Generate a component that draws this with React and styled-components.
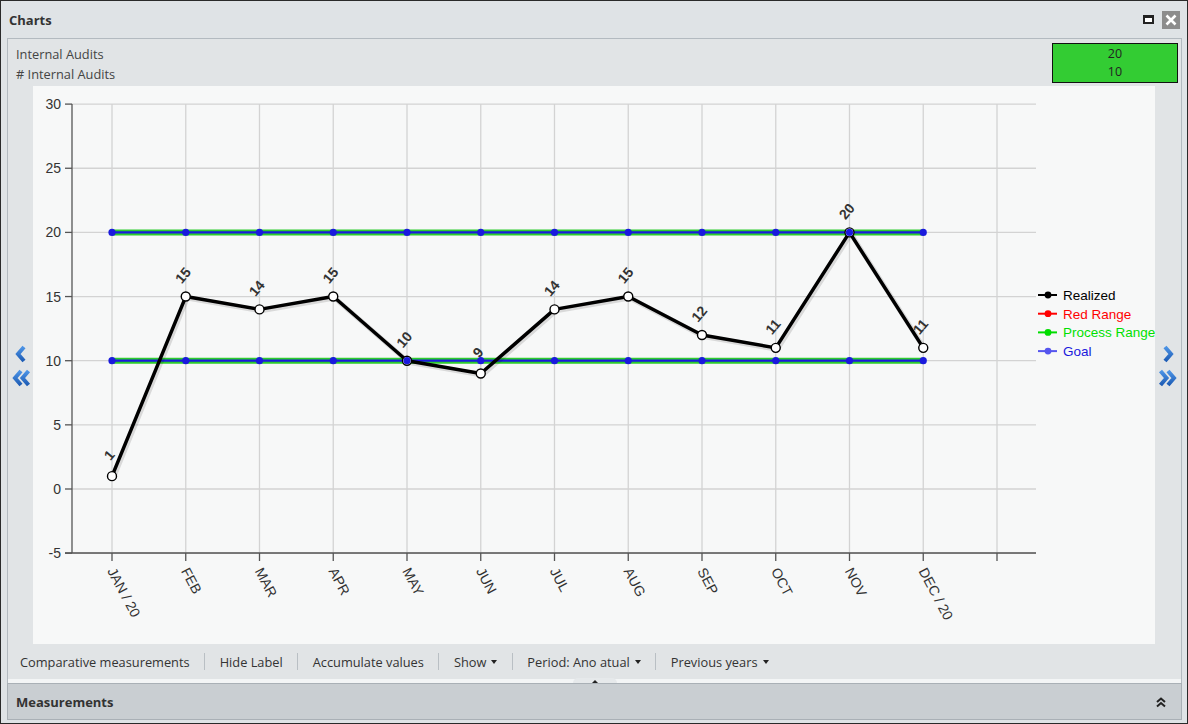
import styled, { createGlobalStyle } from "styled-components";

const GlobalStyle = createGlobalStyle`
  html, body { margin: 0; padding: 0; background: #ffffff; }
  * { box-sizing: border-box; }
`;

const Window = styled.div`
  width: 1188px;
  height: 724px;
  border: 1px solid #2a2a2a;
  background: #dfe3e6;
  display: flex;
  flex-direction: column;
  font-family: "Open Sans", "Noto Sans", sans-serif;
  color: #333;
`;

const TitleBar = styled.div`
  height: 37px;
  display: flex;
  align-items: center;
  justify-content: space-between;
  padding: 0 7px 0 8px;
`;

const Title = styled.span`
  font-weight: bold;
  font-size: 13px;
  color: #333;
`;

const TitleTools = styled.div`
  display: flex;
  align-items: center;
  gap: 8px;
`;

const MaxIcon = styled.span`
  width: 11px;
  height: 9px;
  border: 2px solid #222;
  border-top-width: 3px;
  background: #fff;
`;

const CloseBox = styled.span`
  width: 18px;
  height: 18px;
  background: #8c8c8c;
  display: flex;
  align-items: center;
  justify-content: center;
`;

const Panel = styled.div`
  margin: 0 5px 0 6px;
  border: 1px solid #b3bac0;
  border-bottom: none;
  background: #e1e4e6;
  display: flex;
  flex-direction: column;
`;

const PanelHead = styled.div`
  height: 47px;
  display: flex;
  justify-content: space-between;
  padding: 4px 3px 0 8px;
`;

const HeadText = styled.div`
  display: flex;
  flex-direction: column;
  font-size: 12.8px;
  line-height: 20px;
  color: #444;
  padding-top: 1px;
`;

const StatusBox = styled.div`
  width: 126px;
  height: 40px;
  background: #33cc33;
  border: 1px solid #111;
  display: flex;
  flex-direction: column;
  align-items: center;
  justify-content: center;
  font-size: 12.5px;
  line-height: 18px;
  color: #222;
`;

const ChartRow = styled.div`
  height: 558px;
  display: flex;
`;

const Nav = styled.div`
  width: ${(p) => p.$w}px;
  display: flex;
  flex-direction: column;
  align-items: center;
  justify-content: center;
  gap: 6px;
  padding-top: 2px;
`;

const ChartArea = styled.div`
  width: 1122px;
  background: #f7f8f8;
`;

const Toolbar = styled.div`
  height: 35px;
  display: flex;
  align-items: center;
  padding-left: 4px;
  font-size: 12.8px;
  color: #333;
`;

const ToolItem = styled.span`
  padding: 0 8px;
  display: flex;
  align-items: center;
  gap: 5px;
  white-space: nowrap;
`;

const Sep = styled.span`
  width: 1px;
  height: 17px;
  background: #b9bfc4;
  margin: 0 6.5px;
`;

const Caret = styled.span`
  width: 0;
  height: 0;
  border-left: 3.5px solid transparent;
  border-right: 3.5px solid transparent;
  border-top: 4px solid #222;
`;

const Strip = styled.div`
  height: 4px;
  background: #f3f5f6;
  display: flex;
  justify-content: center;
`;

const Tab = styled.div`
  width: 44px;
  height: 5px;
  margin-top: -1px;
  background: #e6e9eb;
  border-radius: 6px 6px 0 0;
  display: flex;
  justify-content: center;
  padding-top: 1px;
  &::after {
    content: "";
    border-left: 3px solid transparent;
    border-right: 3px solid transparent;
    border-bottom: 3px solid #222;
  }
`;

const MeasureBar = styled.div`
  margin: 0 5px 0 6px;
  height: 37px;
  border: 1px solid #a9b0b6;
  background: #c9ced2;
  display: flex;
  align-items: center;
  justify-content: space-between;
  padding: 0 14px 0 8px;
`;

const MeasureTitle = styled.span`
  font-weight: bold;
  font-size: 13px;
  color: #333;
`;

const Chevron = ({ dbl, dir }) => (
  <svg width="20" height="18" viewBox="0 0 20 18">
    <defs>
      <linearGradient id={`g${dir}${dbl ? 2 : 1}`} x1="0" y1="0" x2="0" y2="1">
        <stop offset="0" stopColor="#4d94e6" />
        <stop offset="1" stopColor="#1d5cb5" />
      </linearGradient>
    </defs>
    <g transform={dir === "r" ? "translate(20,0) scale(-1,1)" : undefined}
       fill="none" stroke={`url(#g${dir}${dbl ? 2 : 1})`} strokeWidth="4" strokeLinejoin="miter">
      {dbl ? (
        <>
          <polyline points="10,2 4,9 10,16" />
          <polyline points="17.5,2 11.5,9 17.5,16" />
        </>
      ) : (
        <polyline points="13,2 7,9 13,16" />
      )}
    </g>
  </svg>
);

const realized = [1, 15, 14, 15, 10, 9, 14, 15, 12, 11, 20, 11];
const months = ["JAN / 20", "FEB", "MAR", "APR", "MAY", "JUN", "JUL", "AUG", "SEP", "OCT", "NOV", "DEC / 20"];
const xOf = (i) => 112 + i * 73.75;
const yOf = (v) => 489 - v * 12.83;

const legend = [
  ["Realized", "#000000", "#000000"],
  ["Red Range", "#ff0000", "#ff0000"],
  ["Process Range", "#00dd00", "#00e000"],
  ["Goal", "#5555ee", "#1a1add"],
];

const Chart = () => {
  const pts = realized.map((v, i) => `${xOf(i)},${yOf(v)}`).join(" ");
  const ticks = [-5, 0, 5, 10, 15, 20, 25, 30];
  return (
    <svg width="1122" height="558" viewBox="33 86 1122 558" fontFamily="'Liberation Sans', Arial, sans-serif">
      {ticks.map((t) => (
        <g key={t}>
          <line x1="72" x2="1036" y1={yOf(t)} y2={yOf(t)} stroke="#d3d3d3" strokeWidth="1.3" />
          <line x1="65" x2="72" y1={yOf(t)} y2={yOf(t)} stroke="#555" strokeWidth="1.3" />
          <text x="61" y={yOf(t) + 5} textAnchor="end" fontSize="14" fill="#333">{t}</text>
        </g>
      ))}
      {Array.from({ length: 13 }).map((_, i) => (
        <g key={i}>
          <line x1={xOf(i)} x2={xOf(i)} y1="104" y2="553" stroke="#d3d3d3" strokeWidth="1.3" />
          <line x1={xOf(i)} x2={xOf(i)} y1="553" y2="561" stroke="#555" strokeWidth="1.3" />
        </g>
      ))}
      <line x1="72" x2="72" y1="104" y2="553" stroke="#555" strokeWidth="1.3" />
      <line x1="65" x2="1036" y1="553" y2="553" stroke="#555" strokeWidth="1.3" />
      {months.map((m, i) => (
        <text key={m} x={xOf(i) - 5} y="571" fontSize="14" fill="#333"
              transform={`rotate(62 ${xOf(i) - 5} 571)`}>{m}</text>
      ))}

      {[20, 10].map((v) => (
        <g key={v}>
          <line x1={xOf(0)} x2={xOf(11)} y1={yOf(v)} y2={yOf(v)} stroke="#2ecc2e" strokeWidth="6" />
          <line x1={xOf(0)} x2={xOf(11)} y1={yOf(v)} y2={yOf(v)} stroke="#1a1add" strokeWidth="2.2" />
        </g>
      ))}

      <polyline points={pts} fill="none" stroke="#000" strokeOpacity="0.12" strokeWidth="5"
                transform="translate(1.5,1.5)" strokeLinejoin="round" />
      <polyline points={pts} fill="none" stroke="#000" strokeWidth="3.5" strokeLinejoin="round" />
      {realized.map((v, i) => (
        <circle key={i} cx={xOf(i)} cy={yOf(v)} r="4.5" fill="#fff" stroke="#000" strokeWidth="1.4" />
      ))}
      {[20, 10].map((v) =>
        realized.map((_, i) => (
          <circle key={`${v}-${i}`} cx={xOf(i)} cy={yOf(v)} r="3.6" fill="#1a1add" />
        ))
      )}
      {realized.map((v, i) => {
        const x = xOf(i) + 1;
        const y = yOf(v) - 18;
        return (
          <text key={i} x={x} y={y} fontSize="14" fontWeight="bold" fill="#333" textAnchor="middle"
                transform={`rotate(-50 ${x} ${y})`}>{v}</text>
        );
      })}

      {legend.map(([name, lineColor, textColor], i) => {
        const y = 295 + i * 18.7;
        return (
          <g key={name}>
            <line x1="1038" x2="1057" y1={y} y2={y} stroke={lineColor} strokeWidth="2" />
            <circle cx="1048" cy={y} r="3.4" fill={lineColor} />
            <text x="1063" y={y + 5} fontSize="13.5" fill={textColor}>{name}</text>
          </g>
        );
      })}
    </svg>
  );
};

const tools = [
  ["Comparative measurements", false],
  ["Hide Label", false],
  ["Accumulate values", false],
  ["Show", true],
  ["Period: Ano atual", true],
  ["Previous years", true],
];

const App = () => (
  <>
    <GlobalStyle />
    <Window>
      <TitleBar>
        <Title>Charts</Title>
        <TitleTools>
          <MaxIcon />
          <CloseBox>
            <svg width="12" height="12" viewBox="0 0 12 12">
              <path d="M1.5 1.5 L10.5 10.5 M10.5 1.5 L1.5 10.5" stroke="#fff" strokeWidth="2.6" />
            </svg>
          </CloseBox>
        </TitleTools>
      </TitleBar>
      <Panel>
        <PanelHead>
          <HeadText>
            <span>Internal Audits</span>
            <span># Internal Audits</span>
          </HeadText>
          <StatusBox>
            <span>20</span>
            <span>10</span>
          </StatusBox>
        </PanelHead>
        <ChartRow>
          <Nav $w={25}>
            <Chevron dir="l" />
            <Chevron dir="l" dbl />
          </Nav>
          <ChartArea>
            <Chart />
          </ChartArea>
          <Nav $w={25}>
            <Chevron dir="r" />
            <Chevron dir="r" dbl />
          </Nav>
        </ChartRow>
        <Toolbar>
          {tools.map(([label, caret], i) => (
            <span key={label} style={{ display: "contents" }}>
              {i > 0 && <Sep />}
              <ToolItem>
                {label}
                {caret && <Caret />}
              </ToolItem>
            </span>
          ))}
        </Toolbar>
        <Strip>
          <Tab />
        </Strip>
      </Panel>
      <MeasureBar>
        <MeasureTitle>Measurements</MeasureTitle>
        <svg width="12" height="12" viewBox="0 0 12 12">
          <path d="M2 6 L6 2.5 L10 6 M2 10.5 L6 7 L10 10.5" fill="none" stroke="#222" strokeWidth="2" />
        </svg>
      </MeasureBar>
    </Window>
  </>
);

export default App;
